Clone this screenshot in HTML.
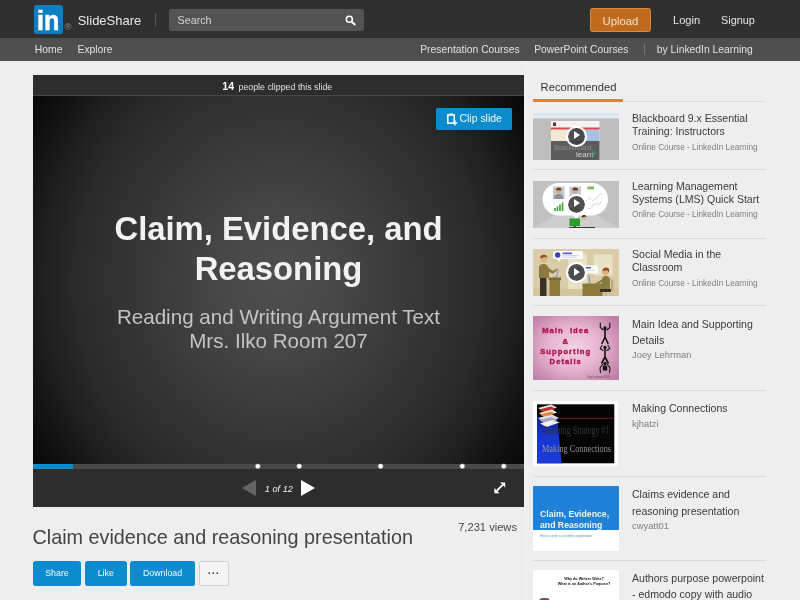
<!DOCTYPE html>
<html><head><meta charset="utf-8">
<style>
*{box-sizing:border-box;margin:0;padding:0}
html,body{width:800px;height:600px;overflow:hidden;background:#eeeeee;font-family:"Liberation Sans",Arial,sans-serif;}
body{position:relative}
.abs{position:absolute}
.t{position:absolute;white-space:nowrap}
#top{left:0;top:0;width:800px;height:38px;background:#303030}
#nav{left:0;top:38px;width:800px;height:22.5px;background:#4f4f4f}
.navt{position:absolute;top:44px;font-size:10.35px;color:#e0e0e0;white-space:nowrap;line-height:12px}
#logo{left:34.3px;top:5.3px;width:28.6px;height:28.4px;background:#0e7ec3;border-radius:2.5px}
#player{left:33px;top:75px;width:491px;height:432px;background:#2d2d2d}
#slide{left:33px;top:95.5px;width:491px;height:368.5px;background:#000;overflow:hidden}
.rt{position:absolute;left:632px;font-size:10.55px;color:#3a3a3a;line-height:12.6px;white-space:nowrap}
.ra{font-size:9.4px !important}
.rs{position:absolute;left:632px;font-size:8.26px;color:#7e7e7e;line-height:10px;white-space:nowrap}
.th{position:absolute;left:533px;width:85.7px;overflow:hidden}
.hr{position:absolute;left:533px;width:233px;height:1px;background:#dadada}
.btn{position:absolute;top:561.3px;height:24.3px;background:#0d8ccd;color:#f4fbff;font-size:8.8px;text-align:center;line-height:24.8px;border-radius:2.5px}
.play{position:absolute;width:20.6px;height:20.6px;border-radius:50%;background:rgba(62,62,62,.9);background-clip:padding-box;border:2.3px solid #fff;margin-top:.4px;margin-left:-.1px}
.play:after{content:"";position:absolute;left:5.6px;top:3.5px;border-left:6.5px solid #fff;border-top:4.5px solid transparent;border-bottom:4.5px solid transparent}
.dot{position:absolute;top:463.9px;width:4.8px;height:4.8px;border-radius:50%;background:#fff;box-shadow:0 0 0 .4px #888}
</style></head><body><div style="position:absolute;left:0;top:0;width:800px;height:600px;will-change:transform">
<div id="top" class="abs"></div>
<div id="nav" class="abs"></div>
<div id="logo" class="abs"></div>
<svg class="abs" style="left:34px;top:5px" width="30" height="30" viewBox="34 5 30 30"><text x="0" y="29.6" transform="translate(37.1 0) scale(.93 1)" font-family="Liberation Sans, sans-serif" font-weight="bold" font-size="27" fill="#fff" stroke="#fff" stroke-width=".5">in</text></svg>
<div class="t" style="left:64.6px;top:20.8px;font-size:9.6px;color:#8e8e8e;line-height:11px">®</div>
<div class="t" style="left:77.7px;top:11.9px;font-size:13px;color:#e8e8e8;line-height:17px">SlideShare</div>
<div class="abs" style="left:155px;top:12.5px;width:1px;height:13.5px;background:#5a5a5a"></div>
<div class="abs" style="left:168.8px;top:8.6px;width:195.2px;height:22.3px;background:#535353;border-radius:2px"></div>
<div class="t" style="left:177.5px;top:13.4px;font-size:10.75px;line-height:14px;color:#d4d4d4">Search</div>
<svg class="abs" style="left:345.4px;top:14.6px" width="11" height="11" viewBox="0 0 12 12"><circle cx="4.7" cy="4.7" r="3.3" fill="none" stroke="#fff" stroke-width="1.7"/><path d="M7.3 7.3 L10.6 10.4" stroke="#fff" stroke-width="2.1" stroke-linecap="round"/></svg>
<div class="abs" style="left:590px;top:8.3px;width:61px;height:24px;background:#bf6a1d;border:1px solid #de8a3e;border-radius:2.5px;color:#f3e0c8;font-size:11.3px;line-height:24.4px;text-align:center">Upload</div>
<div class="t" style="left:673px;top:12.6px;font-size:11.1px;line-height:14px;color:#e4e4e4">Login</div>
<div class="t" style="left:721px;top:12.6px;font-size:10.9px;line-height:14px;color:#e4e4e4">Signup</div>
<div class="navt" style="left:34.8px">Home</div>
<div class="navt" style="left:77.5px">Explore</div>
<div class="navt" style="left:420.2px">Presentation Courses</div>
<div class="navt" style="left:534.2px">PowerPoint Courses</div>
<div class="abs" style="left:644px;top:43.5px;width:1px;height:11.5px;background:#747474"></div>
<div class="navt" style="left:656.8px">by LinkedIn Learning</div>

<div id="player" class="abs"></div>
<div id="slide" class="abs">
 <div class="abs" style="left:0;top:0;width:491px;height:369px;background:radial-gradient(ellipse 272px 300px at 50% 50%, #4e4e4e 0%, #484848 20%, #3d3d3d 40%, #323232 60%, #292929 75%, #1f1f1f 87%, #181818 93%, #101010 100%, #070707 110%)"></div>
</div>
<div class="abs" style="left:33px;top:95px;width:491px;height:1px;background:#484848"></div>
<div class="t" style="left:222.3px;top:79.5px;font-size:8.84px;line-height:12px;color:#e2e2e2"><b style="font-size:10.6px;color:#fff">14</b><span style="margin-left:4.4px">people clipped this slide</span></div>
<div class="abs" style="left:436px;top:107.7px;width:76px;height:22px;background:#0d8ccd;border-radius:1.5px"></div>
<svg class="abs" style="left:446px;top:113px" width="12" height="13" viewBox="0 0 12 13"><rect x="1.8" y="1.9" width="6.4" height="8.2" fill="none" stroke="#fff" stroke-width="1.5"/><rect x="3.4" y="0.4" width="3.2" height="2" fill="#fff"/><path d="M8.9 7.6V12.2 M6.6 9.9H11.2" stroke="#fff" stroke-width="1.5"/></svg>
<div class="t" style="left:459.5px;top:112.7px;font-size:10.45px;line-height:12px;color:#f2faff">Clip slide</div>
<div class="t" style="left:33px;top:208.7px;width:491px;text-align:center;font-weight:bold;font-size:32.8px;line-height:40px;color:#f2f2f2">Claim, Evidence, and<br>Reasoning</div>
<div class="t" style="left:33px;top:304.8px;width:491px;text-align:center;font-size:20.6px;line-height:24px;color:#c4c4c4">Reading and Writing Argument Text<br>Mrs. Ilko Room 207</div>

<div class="abs" style="left:33px;top:464px;width:491px;height:5px;background:#4a4a4a"></div>
<div class="abs" style="left:33px;top:464px;width:40px;height:5px;background:#0d8ccd"></div>
<svg class="abs" style="left:33px;top:460px" width="491" height="12" viewBox="33 460 491 12"><g fill="#fff" stroke="#8a8a8a" stroke-width=".5"><circle cx="257.8" cy="466.3" r="2.45"/><circle cx="299.2" cy="466.3" r="2.45"/><circle cx="380.6" cy="466.3" r="2.45"/><circle cx="462.3" cy="466.3" r="2.45"/><circle cx="503.8" cy="466.3" r="2.45"/></g></svg>
<svg class="abs" style="left:241.8px;top:480px" width="14" height="16" viewBox="0 0 14 16"><path d="M14 0V16L0 8Z" fill="#646464"/></svg>
<svg class="abs" style="left:300.7px;top:480px" width="14" height="16" viewBox="0 0 14 16"><path d="M0 0V16L14 8Z" fill="#fff"/></svg>
<div class="t" style="left:264.7px;top:483px;font-size:9.23px;line-height:12px;color:#eee;font-style:italic">1 of 12</div>
<svg class="abs" style="left:494.2px;top:482.2px" width="11.6" height="11.6" viewBox="0 0 12 12"><path d="M6.3 0.4H11.6V5.7Z M0.4 6.3V11.6H5.7Z" fill="#fff"/><path d="M3 9L9 3" stroke="#fff" stroke-width="1.9"/></svg>

<div class="t" style="left:32.5px;top:525px;font-size:19.8px;line-height:24px;color:#444">Claim evidence and reasoning presentation</div>
<div class="t" style="left:400px;top:520px;width:117px;text-align:right;font-size:11.15px;line-height:14px;color:#484848">7,231 views</div>
<div class="btn" style="left:33px;width:48px">Share</div>
<div class="btn" style="left:84.5px;width:42.5px">Like</div>
<div class="btn" style="left:130px;width:65px">Download</div>
<div class="btn" style="left:199px;width:29.5px;background:#f5f5f5;border:1px solid #d0d0d0;color:#444;line-height:22.5px;font-weight:bold;font-size:11px;letter-spacing:.3px">···</div>

<div class="abs" style="left:524px;top:61px;width:3px;height:539px;background:#f1f1f1"></div>
<div class="t" style="left:540.6px;top:80px;font-size:11.2px;line-height:14px;color:#333">Recommended</div>
<div class="abs" style="left:533px;top:101px;width:233px;height:1px;background:#dcdcdc"></div>
<div class="abs" style="left:533px;top:99.2px;width:90px;height:2.8px;background:#e48325"></div>
<!--ITEMS-START-->
<!-- item 1 -->
<div class="th" style="top:112px;height:48px;background:#bdbdbd">
<svg width="86" height="48" viewBox="0 0 86 48" style="position:absolute;left:0;top:0">
<rect x="0" y="0" width="86" height="6.5" fill="#e4eaf1"/>
<rect x="0" y="2" width="86" height="1" fill="#d2dbe6"/>
<rect x="18" y="9" width="48.5" height="39" fill="#f4f4f4"/>
<rect x="18" y="15.5" width="48.5" height="2.2" fill="#d94a48"/>
<rect x="18" y="17.7" width="22" height="11.5" fill="#f1e9d6"/>
<rect x="40" y="17.7" width="26.5" height="11.5" fill="#a9c0e2"/>
<rect x="18" y="29" width="48.5" height="19" fill="#5c5c5c"/>
<rect x="20" y="10.5" width="3" height="3.5" fill="#7a2a2a"/>
<text x="21" y="38" font-family="Liberation Sans, sans-serif" font-size="7.5" fill="#8a8a8a">Blackboard</text>
<text x="43" y="45" font-family="Liberation Sans, sans-serif" font-size="8" fill="#c9d8d8">learn</text>
<path d="M60 39v5M57.5 41.5h5" stroke="#3aa79a" stroke-width="1"/>
</svg></div>
<div class="play" style="left:566.2px;top:125.6px"></div>
<div class="rt" style="top:112px">Blackboard 9.x Essential<br>Training: Instructors</div>
<div class="rs" style="top:142.6px">Online Course - LinkedIn Learning</div>
<div class="hr" style="top:169px"></div>

<!-- item 2 -->
<div class="th" style="top:180.5px;height:47.5px;background:#c1c1c1">
<svg width="86" height="48" viewBox="0 0 86 48" style="position:absolute;left:0;top:0">
<path d="M0 47.5L30 30H56L86 47.5Z" fill="#cdcdcd"/>
<rect x="9.5" y="2" width="65.5" height="32.5" rx="16.2" fill="#fff"/>
<path d="M40 34L43 38L46 34Z" fill="#fff"/>
<rect x="20" y="5.5" width="11.5" height="12.5" fill="#c3c9d0"/>
<circle cx="25.7" cy="9.8" r="2.6" fill="#d9a777"/><path d="M22.8 9.3a2.9 2.9 0 0 1 5.8 0z" fill="#6b4423"/>
<path d="M21 18c0-4 2-5 4.7-5s4.7 1 4.700 5z" fill="#8d9299"/>
<rect x="36.500" y="5.500" width="11.500" height="12.500" fill="#c3c9d0"/>
<circle cx="42.200" cy="9.800" r="2.600" fill="#d9a777"/><path d="M39.300 9.300a2.900 2.900 0 0 1 5.800 0z" fill="#5a3a1e"/>
<path d="M37.500 18c0-4 2-5 4.700-5s4.700 1 4.700 5z" fill="#e8e8e8"/>
<rect x="54.500" y="5.500" width="6.500" height="2.800" fill="#7bb661"/>
<path d="M22 30v-3M24.5 30v-4.500M27 30v-6.500M29.500 30v-8.500" stroke="#3f9b35" stroke-width="1.600"/>
<path d="M38 30v-3M40.500 30v-4.500M43 30v-6.500M45.500 30v-8.500" stroke="#3f9b35" stroke-width="1.600"/>
<path d="M53 20l3.500-3 3 2.500 3.500-2 3-3.500 3-1.500" fill="none" stroke="#9fca8e" stroke-width="1" stroke-dasharray="1.500 1.200"/>
<path d="M53 25.500l3.500 3 3-4 3.500-2 3 1 3-3.500" fill="none" stroke="#9fca8e" stroke-width="1" stroke-dasharray="1.500 1.200"/>
<rect x="36.500" y="37.500" width="10.500" height="7.500" fill="#2f9a2c"/>
<rect x="40.500" y="45" width="2.500" height="1.300" fill="#2a6e28"/>
<circle cx="51" cy="36.800" r="2.300" fill="#e2b58b"/><path d="M48.600 36.600a2.400 2.400 0 0 1 4.800-.4l-1.500-.8z" fill="#222"/>
<path d="M47.500 45.500c0-4.500 1.500-6 3.800-6s4 1.500 4 6z" fill="#cfcfcf"/>
<rect x="36" y="46" width="26" height="1.600" fill="#3a3a3a"/>
</svg></div>
<div class="play" style="left:566px;top:193.600px"></div>
<div class="rt" style="top:180px">Learning Management<br>Systems (LMS) Quick Start</div>
<div class="rs" style="top:210px">Online Course - LinkedIn Learning</div>
<div class="hr" style="top:237.500px"></div>

<!-- item 3 -->
<div class="th" style="top:248.500px;height:47.500px;background:#d9cda9">
<svg width="86" height="48" viewBox="0 0 86 48" style="position:absolute;left:0;top:0">
<rect x="35" y="5" width="19" height="35" fill="#e9e1c6"/>
<rect x="60.500" y="5.500" width="19" height="21" fill="#e9e1c6"/>
<rect x="0" y="40" width="86" height="8" fill="#d3c69f"/>
<circle cx="10.800" cy="10" r="3.400" fill="#e0b083"/><path d="M7.200 9.600a3.600 3.600 0 0 1 7.200-.6l-2-1.200z" fill="#8b4f22"/>
<path d="M6 29V18.500c0-2.500 2-3.500 4.500-3.500s4.500 1 4.500 3.500l5 3.500 4-2.500 .8 1.200-4.800 4-4-1.800V29z" fill="#8a7a3f"/>
<rect x="7" y="29" width="6.500" height="19" fill="#3a3222"/>
<path d="M18 28l5-.5 2-7 1 .3-2 8z" fill="#8f8fc0"/>
<rect x="15.500" y="28.500" width="12.500" height="2.800" fill="#7a6a30"/>
<rect x="16.500" y="31" width="10.500" height="17" fill="#8b7a3a"/>
<rect x="20" y="2" width="30" height="8" rx="1.500" fill="#fbfbfd"/>
<path d="M24 10l2 3 2-3z" fill="#fbfbfd"/>
<circle cx="24.700" cy="6" r="2.700" fill="#3f3fb4"/>
<rect x="29.500" y="3.600" width="9.500" height="1.600" fill="#5656c8"/>
<rect x="29.500" y="6.300" width="17" height=".8" fill="#c9c9e6"/><rect x="29.500" y="7.800" width="14" height=".8" fill="#c9c9e6"/>
<rect x="42" y="16.500" width="23" height="8" rx="1.500" fill="#fbfbfd"/>
<circle cx="46" cy="20.500" r="2.500" fill="#3f3fb4"/>
<rect x="50" y="18" width="8" height="1.500" fill="#5656c8"/>
<rect x="50" y="20.800" width="12" height=".8" fill="#c9c9e6"/>
<path d="M55 26.500l1.500 8h1l-1-8z" fill="#8f8fc0"/>
<rect x="49.500" y="34.500" width="20" height="13.500" fill="#8b7a3a"/>
<circle cx="72.500" cy="22.800" r="3.400" fill="#e0b083"/><path d="M69.500 22a3.500 3.500 0 0 1 6.800-1.200l-.5 3-1.500-2.500z" fill="#8b4f22"/>
<path d="M69 41V30.500c0-2.500 1.500-3.500 4-3.500s4 1.500 4 4V41z" fill="#8a7a3f"/>
<path d="M69.500 30l-7 4.500 .8 1.200 7-3.500z" fill="#8a7a3f"/>
<rect x="67" y="40" width="11" height="3" fill="#3a3222"/>
<path d="M78 30c1.500 0 2.500 1 2.500 3v8.500h-2.500z" fill="#b9ac7c"/>
<rect x="72" y="43" width="1.500" height="5" fill="#b9ac7c"/>
</svg></div>
<div class="play" style="left:566px;top:262px"></div>
<div class="rt" style="top:248px">Social Media in the<br>Classroom</div>
<div class="rs" style="top:278.6px">Online Course - LinkedIn Learning</div>
<div class="hr" style="top:305px"></div>

<!-- item 4 -->
<div class="th" style="top:316px;height:64px;background:radial-gradient(ellipse 60px 48px at 48% 50%, #f3d3e6 0%, #e6b3d0 45%, #c98bb0 80%, #b8769f 100%)">
<div style="position:absolute;left:0;top:10.2px;width:65.5px;text-align:center;font-family:'Liberation Sans',sans-serif;font-weight:bold;font-size:7.6px;line-height:10.4px;color:#ad0f4c;white-space:nowrap;letter-spacing:1.05px;-webkit-text-stroke:.35px #ad0f4c">Main&nbsp; Idea<br>&amp;<br>Supporting<br>Details</div>
<svg width="86" height="64" viewBox="0 0 86 64" style="position:absolute;left:0;top:0">
<g fill="none" stroke="#111" stroke-width="1.100" stroke-linecap="round">
<path d="M67.300 7v4.500l3 2.500M76.800 7v4.500l-3 2.500"/>
<path d="M72 13v8M72 21l-3 6.500M72 21l3 6.500" stroke-width="1.600"/>
<path d="M69 29.500l-1.800 3 2.800 2M75 29.500l1.800 3-2.800 2"/>
<path d="M72 33v8M72 41l-3.200 6M72 41l3.200 6" stroke-width="1.600"/>
<path d="M69.500 48.500l-2.500 3.500 .5 4.500M74.500 48.500l2.500 3.500-.5 4.500"/>
</g>
<circle cx="72" cy="12" r="1.700" fill="#111"/><circle cx="72" cy="31.500" r="1.700" fill="#111"/><circle cx="72" cy="47.500" r="1.700" fill="#111"/>
<rect x="69.800" y="49.500" width="4.400" height="5" fill="#111"/>
<text x="54" y="61.500" font-family="Liberation Sans, sans-serif" font-size="2.600" fill="#555">Joey Lehrman 2009</text>
</svg></div>
<div class="rt" style="top:315.6px;line-height:16.1px">Main Idea and Supporting<br>Details</div>
<div class="rs ra" style="top:349.6px">Joey Lehrman</div>
<div class="hr" style="top:390px"></div>

<!-- item 5 -->
<div class="th" style="top:400.500px;height:65.500px;width:84.700px;background:#fff">
<svg width="85" height="66" viewBox="0 0 85 66" style="position:absolute;left:0;top:0">
<rect x="4" y="3.300" width="77.300" height="59" fill="#050505"/>
<defs><linearGradient id="bl" x1="0" y1="0" x2="0" y2="1"><stop offset="0" stop-color="#0c2492"/><stop offset=".45" stop-color="#1837cf"/><stop offset="1" stop-color="#1a3bd8"/></linearGradient></defs><path d="M4 16H24L28.700 62.300H4Z" fill="url(#bl)"/>
<rect x="25" y="16.800" width="56.300" height=".9" fill="#7a1f1f"/>
<path d="M5 7l13-3.500 6 3-13 4z" fill="#e9e4e0"/><path d="M6 8.500l12-3 5 2.500-12 3.500z" fill="#b5322a"/>
<path d="M6 12l13-3.500 5 3-12.500 4z" fill="#f1ece6"/><path d="M7 13.500l11-3 4 2-11 3.500z" fill="#d98a3a"/>
<path d="M5 17l14-3.500 7 3.500-13.500 5z" fill="#e4e1ea"/><path d="M6.500 19l12-3 6 3-12 4.200z" fill="#a9a4b8"/>
<path d="M7 22.500l12.500-3.500 7 2.500-13 4.500z" fill="#f3f0ee"/>
<text x="8.500" y="33" font-family="Liberation Serif, serif" font-size="11.5" fill="#333338" textLength="68" lengthAdjust="spacingAndGlyphs">Teaching Strategy #1</text>
<text x="9" y="51" font-family="Liberation Serif, serif" font-size="11" fill="#94949a" textLength="69" lengthAdjust="spacingAndGlyphs">Making Connections</text>
</svg></div>
<div class="rt" style="top:401.9px">Making Connections</div>
<div class="rs ra" style="top:418.7px">kjhatzi</div>
<div class="hr" style="top:476px"></div>

<!-- item 6 -->
<div class="th" style="top:486px;height:65px;background:#fff">
<div style="position:absolute;left:0;top:0;width:86px;height:44px;background:#2081d9"></div>
<div style="position:absolute;left:7px;top:22.500px;font-family:'Liberation Sans',sans-serif;font-weight:bold;font-size:8.700px;line-height:11.2px;color:#eef4e8;white-space:nowrap">Claim, Evidence,<br>and Reasoning</div>
<div style="position:absolute;left:7px;top:48.2px;font-family:'Liberation Sans',sans-serif;font-size:3.300px;line-height:4px;color:#4a90d9;white-space:nowrap">How to write a scientific explanation</div>
</div>
<div class="rt" style="top:486.3px;line-height:16.3px">Claims evidence and<br>reasoning presentation</div>
<div class="rs ra" style="top:520.6px">cwyatt01</div>
<div class="hr" style="top:560px"></div>

<!-- item 7 -->
<div class="th" style="top:570px;height:40px;background:#fff">
<div style="position:absolute;left:8px;top:7.3px;width:86px;text-align:center;font-family:'Liberation Sans',sans-serif;font-weight:bold;font-size:3.7px;line-height:4.3px;color:#111;white-space:nowrap">Why do Writers Write?<br>What is an Author's Purpose?</div>
<div style="position:absolute;left:6px;top:27.5px;width:11px;height:10px;background:#7a4a55;border-radius:4px 4px 0 0"></div>
</div>
<div class="rt" style="top:571px;line-height:15.700px">Authors purpose powerpoint<br>- edmodo copy with audio</div>
<!--ITEMS-END-->
</div></body></html>
